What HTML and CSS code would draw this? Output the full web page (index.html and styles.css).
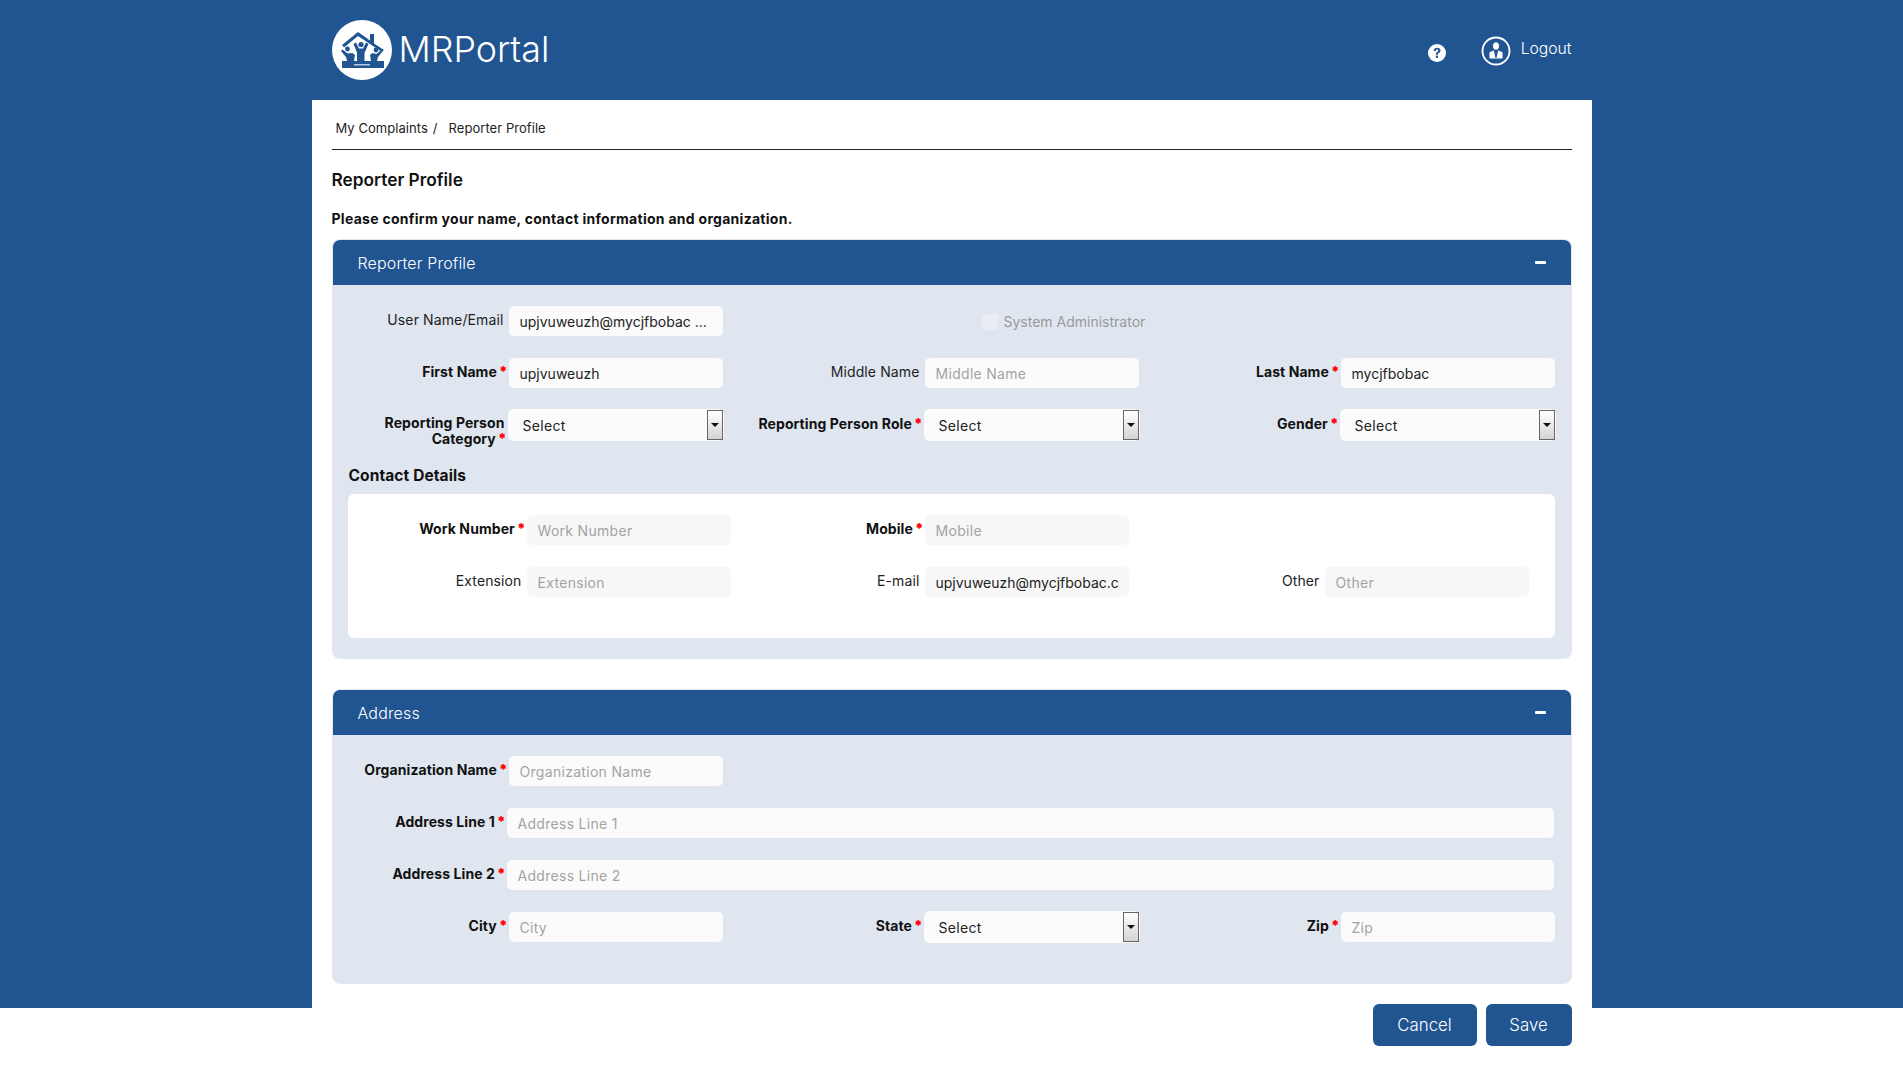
FILE: index.html
```html
<!DOCTYPE html>
<html>
  <head>
    <meta charset="utf-8">
    <title>MRPortal - Reporter Profile</title>
    <link rel="stylesheet" href="styles.css">
  </head>
  <body>
    <header class="topbar">
      <div class="topbar-inner">
        <div class="brand">
          <svg class="brand-logo" viewBox="0 0 60 60" aria-hidden="true">
            <circle cx="30" cy="30" r="30" fill="#fff"/>
            <path d="M10 25 26 12l12 8.500V14h4v9.500L52 30l-2 2-24-16-14 11.500z" fill="#215592"/>
            <circle cx="29" cy="24.500" r="2.600" fill="#215592"/>
            <path d="M21.500 24l2.500-1.500 3 6h4l3-6 2.500 1.500-4 9V41h-7.500v-8.500z" fill="#215592"/>
            <circle cx="15.500" cy="29" r="2.400" fill="#215592"/>
            <path d="M9 31l1.500-1.500 5 4 5-.5 2.500 2-1 6h-7l-1-4z" fill="#215592"/>
            <circle cx="44" cy="30" r="2.400" fill="#215592"/>
            <path d="M50 32l-1.500-1.500-4 3.500-4-1-2.500 2 1 6h6l1-4z" fill="#215592"/>
            <rect x="10" y="41" width="42" height="7" fill="#215592"/>
            <rect x="22" y="44" width="16" height="1.500" fill="#b8c9df"/>
          </svg>
          <span class="brand-name">MRPortal</span>
        </div>
        <div class="topbar-actions">
          <svg class="help-icon" viewBox="0 0 18 18" aria-hidden="true">
            <circle cx="9" cy="9" r="9" fill="#fff"/>
            <path d="M5.600 7C5.700 4.900 7.100 3.700 9.100 3.700c2 0 3.400 1.100 3.400 2.800 0 1.400-.8 2-1.700 2.600-.7.500-.9.800-.9 1.600H7.900c0-1.400.4-2 1.300-2.700.7-.5 1.100-.8 1.100-1.400 0-.6-.5-1-1.200-1-.8 0-1.300.5-1.400 1.400z" fill="#215592"/>
            <rect x="7.900" y="11.600" width="2.100" height="2.300" fill="#215592"/>
          </svg>
          <a class="logout" href="#">
            <svg class="logout-icon" viewBox="0 0 30 30" aria-hidden="true">
              <circle cx="15" cy="15" r="13.500" fill="none" stroke="#fff" stroke-width="1.800"/>
              <ellipse cx="15" cy="10" rx="3" ry="3.800" fill="#fff"/>
              <path d="M12.800 14.500 14.500 22h1l1.700-7.500 4.300 1.700V22.500h-13V16.200z" fill="#fff"/>
            </svg>
            <span>Logout</span>
          </a>
        </div>
      </div>
    </header>

    <main class="page">
      <nav class="crumbs"><a href="#">My Complaints</a><span class="crumb-sep">/</span><span>Reporter Profile</span></nav>
      <h1 class="page-title">Reporter Profile</h1>
      <p class="page-note">Please confirm your name, contact information and organization.</p>

      <section class="panel">
        <div class="panel-head"><span>Reporter Profile</span><i class="collapse"></i></div>
        <div class="panel-body">
          <div class="row row-top">
            <div class="field">
              <label>User Name/Email</label>
              <input class="input" type="text" value="upjvuweuzh@mycjfbobac ...">
            </div>
            <div class="field">
              <div class="check-slot">
                <input class="check" type="checkbox" disabled>
                <span class="check-label">System Administrator</span>
              </div>
            </div>
            <div class="field"></div>
          </div>
          <div class="row">
            <div class="field">
              <label class="req">First Name<b>*</b></label>
              <input class="input" type="text" value="upjvuweuzh">
            </div>
            <div class="field">
              <label>Middle Name</label>
              <input class="input" type="text" placeholder="Middle Name">
            </div>
            <div class="field">
              <label class="req">Last Name<b>*</b></label>
              <input class="input" type="text" value="mycjfbobac">
            </div>
          </div>
          <div class="row row-select">
            <div class="field">
              <label class="req wrap"><span class="wrap-first">Reporting Person</span><span class="wrap-last">Category<b>*</b></span></label>
              <div class="select"><span>Select</span><i class="select-btn"></i></div>
            </div>
            <div class="field">
              <label class="req">Reporting Person Role<b>*</b></label>
              <div class="select"><span>Select</span><i class="select-btn"></i></div>
            </div>
            <div class="field">
              <label class="req">Gender<b>*</b></label>
              <div class="select"><span>Select</span><i class="select-btn"></i></div>
            </div>
          </div>

          <h2 class="sub-title">Contact Details</h2>
          <div class="card">
            <div class="row row-card">
              <div class="field">
                <label class="req">Work Number<b>*</b></label>
                <input class="input input-sm" type="text" placeholder="Work Number">
              </div>
              <div class="field">
                <label class="req">Mobile<b>*</b></label>
                <input class="input input-sm" type="text" placeholder="Mobile">
              </div>
              <div class="field"></div>
            </div>
            <div class="row row-card">
              <div class="field">
                <label>Extension</label>
                <input class="input input-sm" type="text" placeholder="Extension">
              </div>
              <div class="field">
                <label>E-mail</label>
                <input class="input input-sm" type="text" value="upjvuweuzh@mycjfbobac.com">
              </div>
              <div class="field">
                <label>Other</label>
                <input class="input input-sm" type="text" placeholder="Other">
              </div>
            </div>
          </div>
        </div>
      </section>

      <section class="panel panel-address">
        <div class="panel-head"><span>Address</span><i class="collapse"></i></div>
        <div class="panel-body">
          <div class="row row-top">
            <div class="field">
              <label class="req">Organization Name<b>*</b></label>
              <input class="input" type="text" placeholder="Organization Name">
            </div>
            <div class="field"></div>
            <div class="field"></div>
          </div>
          <div class="line">
            <label class="req">Address Line 1<b>*</b></label>
            <input class="input input-wide" type="text" placeholder="Address Line 1">
          </div>
          <div class="line">
            <label class="req">Address Line 2<b>*</b></label>
            <input class="input input-wide" type="text" placeholder="Address Line 2">
          </div>
          <div class="row row-select">
            <div class="field">
              <label class="req">City<b>*</b></label>
              <input class="input" type="text" placeholder="City">
            </div>
            <div class="field">
              <label class="req">State<b>*</b></label>
              <div class="select"><span>Select</span><i class="select-btn"></i></div>
            </div>
            <div class="field">
              <label class="req">Zip<b>*</b></label>
              <input class="input" type="text" placeholder="Zip">
            </div>
          </div>
        </div>
      </section>
    </main>

    <footer class="actions">
      <div class="actions-inner">
        <button class="btn btn-cancel" type="button">Cancel</button>
        <button class="btn btn-save" type="button">Save</button>
      </div>
    </footer>
  </body>
</html>
```
FILE: styles.css
```css
html, body {
  height: 100%;
}

body {
  margin: 0;
  height: 1066px;
  overflow: hidden;
  display: flex;
  flex-direction: column;
  background-color: #215592;
  color: #111;
  font-family: "Inter", "Liberation Sans", sans-serif;
  font-size: 14px;
}

.topbar {
  height: 100px;
  flex: none;
}

.topbar-inner {
  width: 1240px;
  height: 100px;
  margin: 0 auto;
  display: flex;
  align-items: flex-start;
  justify-content: space-between;
  color: #fff;
}

.brand {
  display: flex;
  align-items: center;
  margin-top: 20px;
}

.brand-logo {
  width: 60px;
  height: 60px;
}

.brand-name {
  margin: -2px 0 0 7px;
  font-size: 35.800px;
  font-weight: 300;
}

.topbar-actions {
  display: flex;
  align-items: flex-start;
  margin-top: 36px;
}

.help-icon {
  width: 18px;
  height: 18px;
  margin-top: 8px;
}

.logout {
  display: flex;
  margin-left: 35px;
  color: #fff;
  text-decoration: none;
  font-size: 15.700px;
  font-weight: 300;
}

.logout-icon {
  width: 30px;
  height: 30px;
}

.logout span {
  margin-left: 10px;
  margin-top: 3px;
}

.page {
  flex: 1;
  width: 1240px;
  margin: 0 auto;
  padding: 0 20px;
  background-color: #fff;
  overflow: hidden;
}

.crumbs {
  height: 49px;
  padding-left: 4px;
  border-bottom: 1px solid #222;
  line-height: 57px;
  font-size: 13px;
  letter-spacing: .05px;
  color: #222;
}

.crumbs a {
  color: #222;
  text-decoration: none;
}

.crumb-sep {
  margin: 0 11px 0 5px;
}

.page-title {
  margin: 18px 0 0;
  font-size: 17.300px;
  line-height: 24px;
  font-weight: 600;
}

.page-note {
  margin: 17px 0 0;
  font-size: 14px;
  line-height: 20px;
  letter-spacing: .28px;
  font-weight: 700;
}

.panel {
  margin-top: 10px;
  border: 1px solid #e4e8ee;
  border-radius: 8px;
  background-color: #dfe6ef;
}

.panel-address {
  margin-top: 30px;
}

.panel-head {
  height: 45px;
  padding: 0 25px;
  display: flex;
  align-items: center;
  justify-content: space-between;
  background-color: #215592;
  border-radius: 7px 7px 0 0;
  color: #fff;
  font-size: 16px;
  letter-spacing: .15px;
  font-weight: 300;
}

.collapse {
  width: 11px;
  height: 3px;
  background-color: #fff;
  border-radius: 1px;
}

.panel-body {
  padding: 21px 16px 20px 0;
}

.panel-address .panel-body {
  padding-bottom: 40px;
}

.row {
  display: grid;
  grid-template-columns: 390px 416px 416px;
  margin-top: 22px;
}

.row-top {
  margin-top: 0;
}

.row-select {
  margin-top: 21px;
  grid-auto-rows: 32px;
}

.field {
  display: flex;
  justify-content: flex-end;
  align-items: center;
}

label {
  margin: 0 5px 2px 0;
  text-align: right;
  font-size: 14px;
  line-height: 16px;
  letter-spacing: .12px;
  color: #222;
  white-space: nowrap;
}

label.req {
  margin-right: 1px;
  font-weight: 700;
  letter-spacing: .08px;
  color: #111;
}

label.wrap {
  align-self: flex-start;
  margin-top: 6px;
}

.wrap-first {
  display: block;
  padding-right: 2px;
}

.wrap-last {
  display: block;
}

label b {
  margin-left: 2px;
  color: #f00;
}

.input {
  width: 214px;
  height: 30px;
  box-sizing: border-box;
  padding: 0 10px 0 11px;
  border: 0;
  border-radius: 5px;
  background-color: #fbfbfb;
  font-family: inherit;
  font-size: 14px;
  color: #222;
  outline: none;
}

.input::placeholder {
  color: #a3a3a3;
  letter-spacing: .3px;
}

.input-sm {
  width: 204px;
  background-color: #f7f7f7;
}

.input-wide {
  width: 1047px;
}

.select {
  position: relative;
  width: 216px;
  height: 32px;
  margin-right: -1px;
  box-sizing: border-box;
  padding-left: 15px;
  border-radius: 6px;
  background-color: #fbfbfb;
  font-size: 14px;
  letter-spacing: .3px;
  line-height: 33px;
  color: #222;
}

.select-btn {
  position: absolute;
  top: 1px;
  right: 1px;
  width: 16px;
  height: 30px;
  box-sizing: border-box;
  border: 1px solid #666;
  background: linear-gradient(#fff, #d4d4d4);
}

.select-btn::after {
  content: "";
  position: absolute;
  left: 3px;
  top: 12px;
  border-left: 4px solid transparent;
  border-right: 4px solid transparent;
  border-top: 4px solid #111;
}

.check-slot {
  width: 214px;
  height: 30px;
  box-sizing: border-box;
  padding-left: 57px;
  display: flex;
  align-items: center;
  white-space: nowrap;
}

.check {
  appearance: none;
  flex: none;
  width: 16px;
  height: 16px;
  margin: 1px 0 0;
  background-color: #eaeef4;
  border-radius: 2px;
}

.check-label {
  margin: 1px 0 0 6px;
  font-size: 14px;
  color: #999;
}

.sub-title {
  margin: 25px 0 0 16px;
  font-size: 15.500px;
  line-height: 20px;
  letter-spacing: .1px;
  font-weight: 700;
}

.card {
  margin: 8px 0 0 15px;
  padding: 21px 26px 41px 0;
  background-color: #fff;
  border-radius: 6px;
}

.row-card {
  grid-template-columns: 383px 398px 400px;
}

.row-card:first-child {
  margin-top: 0;
}

.line {
  margin-top: 22px;
  padding-right: 1px;
  display: flex;
  justify-content: flex-end;
  align-items: center;
}

.actions {
  flex: none;
  height: 58px;
  background-color: #fff;
}

.actions-inner {
  width: 1240px;
  margin: -4px auto 0;
  display: flex;
  justify-content: flex-end;
  gap: 9px;
}

.btn {
  height: 42px;
  border: 0;
  border-radius: 6px;
  background-color: #215592;
  color: #fff;
  font-family: inherit;
  font-size: 16.800px;
  font-weight: 300;
}

.btn-cancel {
  width: 104px;
}

.btn-save {
  width: 86px;
}
```
